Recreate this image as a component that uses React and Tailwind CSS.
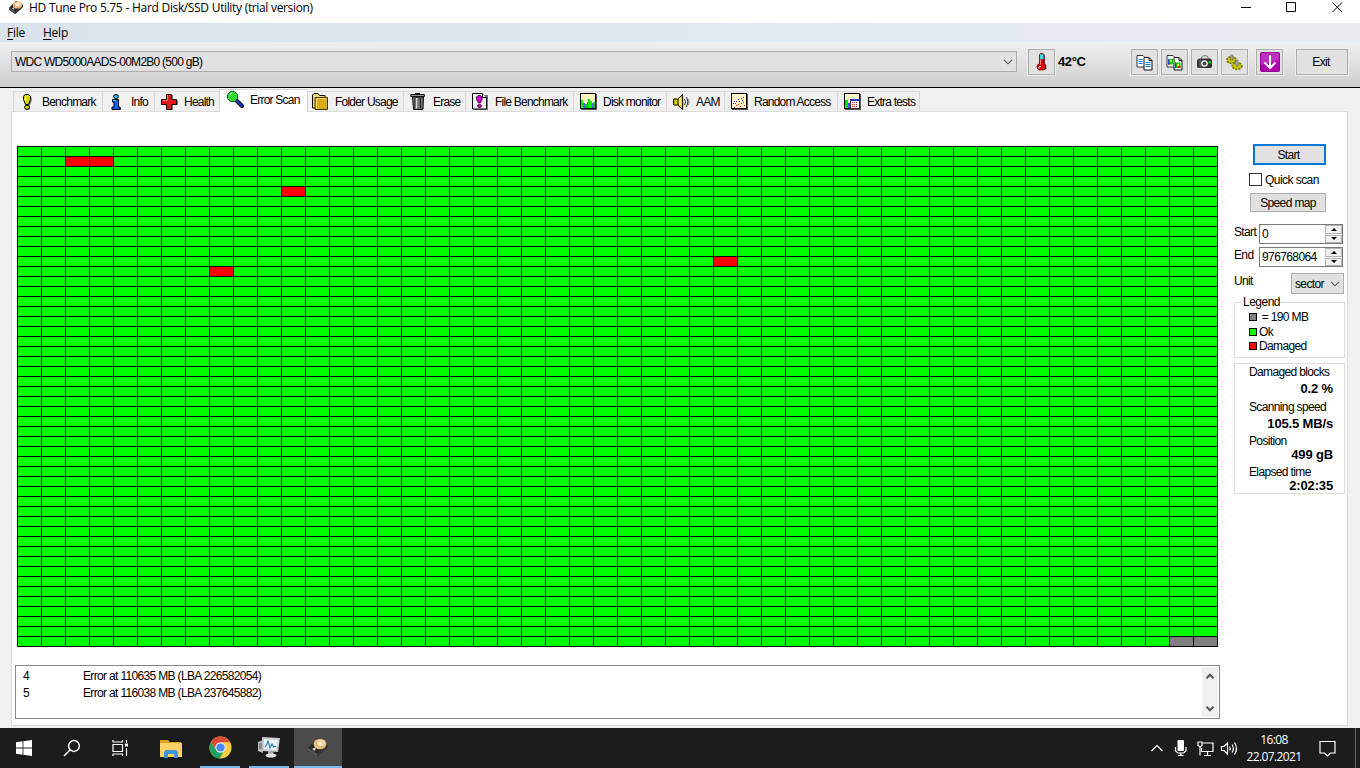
import React from 'react';

const COLS = 50;
const ROWS = 50;
const damaged = new Set(['1-2', '1-3', '4-11', '11-29', '12-8']);
const pending = new Set(['49-48', '49-49']);

const ChevronDown = ({ className = '' }) => (
  <svg viewBox="0 0 10 6" className={`h-[6px] w-[10px] shrink-0 ${className}`} fill="none" stroke="#555" strokeWidth="1.1">
    <path d="M1 0.8 5 4.8 9 0.8" />
  </svg>
);

const DiskIcon = ({ className = 'h-4 w-4' }) => (
  <svg viewBox="0 0 20 20" className={className}>
    <path d="M0 11 10 1 20 7 20 10 9 20 0 14Z" fill="#2e2a28" />
    <path d="M0 11 9 16.500 9 20 0 14Z" fill="#555" />
    <path d="M9 16.500 20 7 20 10 9 20Z" fill="#3b3634" />
    <ellipse cx="12" cy="7" rx="6.500" ry="5.200" fill="#e8b878" />
    <ellipse cx="13" cy="6" rx="4" ry="3" fill="#f6d6a4" />
    <circle cx="12" cy="7" r="1.600" fill="#fff" />
    <path d="M4 12 8 10 7 14Z" fill="#d8d8d8" />
  </svg>
);

const BenchmarkIcon = () => (
  <svg viewBox="0 0 16 16" className="h-4 w-4">
    <path d="M5 3 6.500 1 10.500 1 12 3 12 6 10 11 7 11 5 6Z" transform="translate(.7 .7)" fill="#777" />
    <path d="M4.500 2.500 6 .5 9.500 .5 11.500 2.500 11.500 5.500 9.500 10.500 6.500 10.500 4.500 5.500Z" fill="#d8d800" stroke="#000" />
    <path d="M6.500 2.500v4" stroke="#ffffc0" strokeWidth="1.300" />
    <ellipse cx="8.700" cy="14" rx="2.500" ry="2" fill="#777" />
    <ellipse cx="8" cy="13.300" rx="2.500" ry="2" fill="#d8d800" stroke="#000" />
  </svg>
);

const InfoIcon = () => (
  <svg viewBox="0 0 16 16" className="h-4 w-4">
    <path d="M5 6.500h6v7h2v2.500H5v-2.500h1.500v-4.500H5Z" fill="#555" />
    <path d="M4.500 5.500h6v7.500h1.500v2.500h-8V13h2V8h-1.500Z" fill="#1060f8" stroke="#000" />
    <path d="M5 6.500h3" stroke="#40c8ff" />
    <ellipse cx="8" cy="2.500" rx="2.500" ry="2" fill="#20c8ff" stroke="#000" />
  </svg>
);

const HealthIcon = () => (
  <svg viewBox="0 0 17 16" className="h-4 w-[17px]">
    <path d="M6 1h6v5h5v5h-5v5H6v-5H1V6h5Z" fill="#777" />
    <path d="M5.500.5h5v5h5v5h-5v5h-5v-5h-5v-5h5Z" fill="#e01818" stroke="#200" />
    <path d="M6.500 6.500v-5M1.500 6.500h5" stroke="#ff7070" />
  </svg>
);

const ScanIcon = () => (
  <svg viewBox="0 0 17 17" className="h-[17px] w-[17px]">
    <path d="M9.500 9.500 15 15" stroke="#000" strokeWidth="4" strokeLinecap="round" />
    <path d="M9.500 9.500 15 15" stroke="#1038d8" strokeWidth="2" strokeLinecap="round" />
    <path d="M3.500.5h4l3 3v4l-3 3h-4l-3-3v-4Z" fill="#2edc2e" stroke="#063" />
    <path d="M3 4 5 2" stroke="#c0ffc0" strokeWidth="1.500" />
  </svg>
);

const FolderIcon = () => (
  <svg viewBox="0 0 16 17" className="h-[17px] w-4">
    <path d="M.5 15V2L2 .5h4L7.500 2.500h5.500V15Z" fill="#f5e060" stroke="#000" />
    <path d="M3 16.500v-12h12.500v12Z" fill="#d8ac18" stroke="#3c3000" />
    <path d="M4.500 15.500v-10h10" stroke="#ffe070" fill="none" />
  </svg>
);

const EraseIcon = () => (
  <svg viewBox="0 0 16 17" className="h-[17px] w-4">
    <path d="M2.500 4h11l-.5 12.500h-9.500Z" fill="#707070" stroke="#111" />
    <path d="M5 5v10.500M10.500 5v10.500" stroke="#222" />
    <path d="M6.500 5v10.500" stroke="#ddd" strokeWidth="1.500" />
    <path d="M.8 1.500h13.500v2H.8Z" fill="#999" stroke="#111" />
    <path d="M5 .5h5" stroke="#111" />
  </svg>
);

const FileBenchmarkIcon = () => (
  <svg viewBox="0 0 16 17" className="h-[17px] w-4">
    <path d="M2 2h14v15H2Z" fill="#777" />
    <path d="M.5.5h10l4 4v11.500H.5Z" fill="#f0f0f0" stroke="#000" />
    <path d="M10.500.5v4h4" fill="#fff" stroke="#000" />
    <path d="M4.500 4 6 2.500h2.500L10 4v2.500L8.500 10h-2L4.500 6.500Z" fill="#d000d0" stroke="#400040" strokeWidth=".8" />
    <ellipse cx="7.500" cy="13" rx="2" ry="1.500" fill="#d000d0" stroke="#400040" strokeWidth=".8" />
  </svg>
);

const MonitorIcon = () => (
  <svg viewBox="0 0 17 17" className="h-[17px] w-[17px]" shapeRendering="crispEdges">
    <path d="M1 1h16v16H1Z" fill="#555" />
    <path d="M.5.5h15v15H.5Z" fill="#fff6c0" stroke="#000" />
    <path d="M1 7h2v8H1ZM3 10h2v5H3ZM8 6h2v9H8ZM10 8h2v7h-2ZM13 9h2v6h-2Z" fill="#00f000" />
    <path d="M3 10h2v5H3ZM7 9h1v6H7ZM12 10h1v5h-1Z" fill="#5050ff" />
    <path d="M5 11h2v4H5ZM13 11h2v4h-2Z" fill="#00d000" />
  </svg>
);

const SpeakerIcon = () => (
  <svg viewBox="0 0 18 16" className="h-4 w-[18px]">
    <path d="M.7 5h4l5-4.500v15L4.700 11h-4Z" fill="#d8d000" stroke="#000" />
    <path d="M5 5v6" stroke="#000" />
    <path d="M7 4v7" stroke="#ffff90" strokeWidth="1.500" />
    <path d="M11.500 5q2 3 0 6M13.500 3q3 5 0 10" stroke="#222" fill="none" />
    <path d="M15.500 5q1.500 3 0 6" stroke="#888" fill="none" />
  </svg>
);

const RandomIcon = () => (
  <svg viewBox="0 0 17 17" className="h-[17px] w-[17px]" shapeRendering="crispEdges">
    <path d="M1 1h16v16H1Z" fill="#555" />
    <path d="M.5.5h15v15H.5Z" fill="#fff6c8" stroke="#000" />
    <path d="M2 10h1v1H2ZM3 8h1v1H3ZM5 8h1v1H5ZM7 6h1v1H7ZM8 8h1v1H8ZM10 5h1v1h-1ZM12 4h1v1h-1ZM11 7h1v1h-1Z" fill="#2020e0" />
    <path d="M3 14h1v1H3ZM5 12h1v1H5ZM4 10h1v1H4ZM7 11h1v1H7ZM9 13h1v1H9ZM10 10h1v1h-1ZM12 9h1v1h-1ZM13 12h1v1h-1Z" fill="#e02020" />
  </svg>
);

const ExtraIcon = () => (
  <svg viewBox="0 0 17 17" className="h-[17px] w-[17px]" shapeRendering="crispEdges">
    <path d="M1 1h16v16H1Z" fill="#555" />
    <path d="M.5.5h15v15H.5Z" fill="#fff6c8" stroke="#000" />
    <path d="M1 7h3v8H1Z" fill="#00e000" />
    <path d="M4 10h2v5H4Z" fill="#5050ff" />
    <path d="M6 6h9v9H6Z" fill="#fff" stroke="#333" />
    <path d="M6 6h9v2H6Z" fill="#2040c0" />
    <path d="M8 9h1v1H8ZM10 9h1v1h-1ZM12 9h1v1h-1ZM8 11h1v1H8ZM10 11h1v1h-1ZM12 11h1v1h-1ZM8 13h1v1H8ZM10 13h1v1h-1ZM12 13h1v1h-1Z" fill="#e02020" />
  </svg>
);

const tabs = [
  { label: 'Benchmark', icon: BenchmarkIcon, width: 'w-[89px]', slot: 'w-[28px] pl-[5px]' },
  { label: 'Info', icon: InfoIcon, width: 'w-[52px]', slot: 'w-[28px] pl-[5px]' },
  { label: 'Health', icon: HealthIcon, width: 'w-[65px]' },
  { label: 'Error Scan', icon: ScanIcon, width: 'w-[88px]', slot: 'w-[30px] pl-[7px]', active: true },
  { label: 'Folder Usage', icon: FolderIcon, width: 'w-[96px]', slot: 'w-[27px] pl-[4px]' },
  { label: 'Erase', icon: EraseIcon, width: 'w-[62px]' },
  { label: 'File Benchmark', icon: FileBenchmarkIcon, width: 'w-[108px]' },
  { label: 'Disk monitor', icon: MonitorIcon, width: 'w-[93px]' },
  { label: 'AAM', icon: SpeakerIcon, width: 'w-[58px]', slot: 'w-[29px] pl-[6px]' },
  { label: 'Random Access', icon: RandomIcon, width: 'w-[113px]' },
  { label: 'Extra tests', icon: ExtraIcon, width: 'w-[82px]' },
];

const Tab = ({ label, icon: Icon, width, slot = 'w-[29px] pl-[6px]', active }) => (
  <div
    className={`${width} flex items-center border-l border-t border-[#d9d9d9] ${
      active ? 'relative z-10 -mb-px h-[23px] bg-white pb-[3px]' : 'h-[20px] bg-[#f0f0f0]'
    }`}
  >
    <span className={`flex shrink-0 ${slot}`}><Icon /></span>
    <span className="whitespace-nowrap tracking-[-0.78px]">{label}</span>
  </div>
);

const TitleBar = () => (
  <div className="flex h-[23px] items-start bg-white pl-[9px] font-['Open_Sans',sans-serif] text-[12px] leading-[16px]">
    <DiskIcon className="h-[14px] w-[14px]" />
    <span className="ml-[6px] whitespace-nowrap tracking-[-0.37px] [word-spacing:0.4px]">HD Tune Pro 5.75 - Hard Disk/SSD Utility (trial version)</span>
    <svg viewBox="0 0 110 14" className="ml-auto mr-[12px] h-[14px] w-[110px]" fill="none" stroke="#000">
      <path d="M3 7.500h10" />
      <path d="M48.500 2.500h9v9h-9Z" />
      <path d="M94.500 2.500 104 12M104 2.500 94.500 12" />
    </svg>
  </div>
);

const MenuBar = () => (
  <div className="flex h-[19px] items-center gap-[18px] bg-gradient-to-r from-[#dae3ec] via-[#e2e8f1] to-[#e8edf1] pl-[7px] font-['Open_Sans',sans-serif] text-[12px] leading-[18px] tracking-[-0.25px]">
    <span><u className="underline-offset-2">F</u>ile</span>
    <span><u className="underline-offset-2">H</u>elp</span>
  </div>
);

const ToolButton = ({ children, className = 'w-[27px]' }) => (
  <div className={`${className} flex h-[26px] shrink-0 items-center justify-center border border-[#adadad] bg-[#e1e1e1] shadow-[0_0_0_1px_#eeeeee]`}>
    {children}
  </div>
);

const Thermometer = () => (
  <svg viewBox="0 0 11 18" className="h-[18px] w-[11px]">
    <path d="M4 2 5 .5h2.500L9 2v8.500l1.500 2v3L8.500 17H3L1 15.500v-3l2.500-2Z" fill="#555" />
    <path d="M3.500 2 4.500 .5h2L8 2v8.500l1.500 2v2.500L7.500 17h-4L1 15v-2.500l2.500-2Z" fill="#d80808" stroke="#600" strokeWidth=".8" />
    <path d="M4 1.200h3.500v5H4Z" fill="#40d8e8" />
    <path d="M4.500 6.500v5" stroke="#ff8080" />
    <path d="M3 13.500h2M3 14v1.500" stroke="#fff" />
  </svg>
);

const CopyIcon = ({ picture }) => (
  <svg viewBox="0 0 17 17" className="h-[17px] w-[17px]">
    <path d="M1 1.500h6l2 2V13H1Z" fill="#fff" stroke="#333" />
    <path d="M8 3.500h5l3 3v9.500H8Z" fill="#fff" stroke="#111" />
    <path d="M13 3.500v3h3" fill="none" stroke="#111" />
    {picture ? (
      <g>
        <path d="M2.500 5h4.500v5.500H2.500ZM9.500 8.500h5v5.500h-5Z" fill="#10c010" />
        <path d="M2.500 8.500h1.500v2H2.500ZM12 12h2.500v2H12Z" fill="#e02020" />
        <path d="M4 6h2v2H4ZM11 10h2v2h-2Z" fill="#e0f020" />
        <path d="M2.500 5v5.500M9.500 8.500V14" stroke="#1848c0" />
      </g>
    ) : (
      <path d="M2.500 5.500h4M2.500 7.500h4M2.500 9.500h4M9.500 8.500h5M9.500 10.500h5M9.500 12.500h5" stroke="#0878e0" />
    )}
  </svg>
);

const CameraIcon = () => (
  <svg viewBox="0 0 17 15" className="h-[15px] w-[17px]">
    <path d="M5.500 4V2L7 .8h3.500L12 2v2" fill="#ddd" stroke="#777" />
    <path d="M1 5 3 3.500h11.500L16 5v7l-1 1H2l-1-1Z" fill="#333" />
    <path d="M4 4v9" stroke="#777" />
    <circle cx="8.500" cy="8.500" r="3.300" fill="#fff" />
    <circle cx="8.500" cy="8.500" r="2" fill="#444" />
    <path d="M12.500 6H15v2.500h-2.500Z" fill="#00c820" />
  </svg>
);

const GearsIcon = () => (
  <svg viewBox="0 0 17 17" className="h-[17px] w-[17px]">
    <ellipse cx="5.500" cy="6" rx="4.500" ry="3.300" fill="#d0c800" stroke="#807800" strokeWidth="1.800" strokeDasharray="2 1" />
    <ellipse cx="11" cy="12" rx="4.800" ry="3.300" fill="#d0c800" stroke="#807800" strokeWidth="1.800" strokeDasharray="2 1" />
    <path d="M4.800 1h2v5h-2ZM10 6h2v6h-2Z" fill="#c8c8c8" stroke="#555" strokeWidth=".7" />
  </svg>
);

const DownloadIcon = () => (
  <svg viewBox="0 0 20 20" className="h-5 w-5">
    <rect x=".5" y=".5" width="19" height="19" rx="1" fill="#b000b0" stroke="#900090" />
    <path d="M1 1h18v7L1 13Z" fill="#d060d0" opacity=".5" />
    <path d="M10 3v13" stroke="#fff" strokeWidth="2" />
    <path d="M4.500 10.500 10 16l5.500-5.500" fill="none" stroke="#fff" strokeWidth="2" />
  </svg>
);

const Toolbar = () => (
  <div className="flex h-[46px] items-start border-b border-black bg-gradient-to-b from-[#f0f0f0] to-[#cecece] pl-[11px] pt-[7px]">
    <div className="mt-[2px] flex h-[21px] w-[1006px] items-center justify-between border border-[#adadad] bg-[#e1e1e1] pl-[3px] pr-[3px]">
      <span className="tracking-[-0.74px]">WDC WD5000AADS-00M2B0 (500 gB)</span>
      <ChevronDown />
    </div>
    <div className="ml-[11px] flex items-center">
      <ToolButton><Thermometer /></ToolButton>
      <span className="ml-[3px] w-[73px] whitespace-nowrap text-[13px] font-bold tracking-[-0.4px]">42°C</span>
    </div>
    <div className="flex gap-[3px]">
      <ToolButton><CopyIcon /></ToolButton>
      <ToolButton><CopyIcon picture /></ToolButton>
      <ToolButton><CameraIcon /></ToolButton>
      <ToolButton><GearsIcon /></ToolButton>
    </div>
    <div className="ml-[8px] flex gap-[13px]">
      <ToolButton><DownloadIcon /></ToolButton>
      <ToolButton className="w-[52px] pr-[2px]">Exit</ToolButton>
    </div>
  </div>
);

const cellColor = (row, col) => {
  const key = `${row}-${col}`;
  if (damaged.has(key)) return 'bg-[#ff0000]';
  if (pending.has(key)) return 'bg-[#808080]';
  return 'bg-[#00ff00]';
};

const BlockMap = () => (
  <div className="grid h-[501px] w-[1201px] grid-cols-[repeat(50,23px)] grid-rows-[repeat(50,9px)] gap-px bg-black p-px">
    {Array.from({ length: ROWS * COLS }, (_, i) => (
      <div key={i} className={cellColor(Math.floor(i / COLS), i % COLS)} />
    ))}
  </div>
);

const ErrorLog = () => (
  <div className="flex h-[54px] w-[1205px] justify-between border border-[#828790] bg-white p-px">
    <div className="pl-[6px] pt-px leading-[17px] tracking-[-0.66px]">
      <div className="flex"><span className="w-[60px]">4</span><span>Error at 110635 MB (LBA 226582054)</span></div>
      <div className="flex"><span className="w-[60px]">5</span><span>Error at 116038 MB (LBA 237645882)</span></div>
    </div>
    <div className="flex w-[16px] flex-col items-center justify-between bg-[#f0f0f0] pb-[5px] pt-[6px]">
      <svg viewBox="0 0 8 6" className="h-[6px] w-2" fill="none" stroke="#555" strokeWidth="2"><path d="M.5 5.200 4 1.700 7.500 5.200" /></svg>
      <svg viewBox="0 0 8 6" className="h-[6px] w-2" fill="none" stroke="#555" strokeWidth="2"><path d="M.5 .8 4 4.300 7.500 .8" /></svg>
    </div>
  </div>
);

const SpinButton = ({ d }) => (
  <div className="flex flex-1 items-center justify-center border border-[#b4b4b4] bg-[#f0f0f0]">
    <svg viewBox="0 0 6 3" className="h-[3px] w-[6px]"><path d={d} /></svg>
  </div>
);

const Spinner = ({ label, value }) => (
  <div className="flex h-[20px]">
    <span className="w-[25px] leading-[17px]">{label}</span>
    <div className="flex h-[20px] w-[84px] border border-[#7a7a7a] bg-white">
      <span className="flex-1 pl-[2px] leading-[18px] tracking-[-0.6px]">{value}</span>
      <div className="flex w-[17px] flex-col gap-px bg-white">
        <SpinButton d="M0 3h6L3 0Z" />
        <SpinButton d="M0 0h6L3 3Z" />
      </div>
    </div>
  </div>
);

const LegendRow = ({ color, label, className }) => (
  <div className={`flex items-center ${className}`}>
    <span className={`h-[8px] w-[8px] border border-black ${color}`} />
    <span className="ml-[2px] whitespace-pre">{label}</span>
  </div>
);

const Stat = ({ label, value, className, valueClass }) => (
  <div className={className}>
    <div className="pl-[14px] leading-[16px]">{label}</div>
    <div className={`pr-[11px] text-right text-[13px] font-bold leading-[16px] tracking-[-0.15px] ${valueClass}`}>{value}</div>
  </div>
);

const Sidebar = () => (
  <div className="w-[111px] pt-[32px] tracking-[-0.64px]">
    <div className="ml-[19px] flex h-[21px] w-[73px] items-center justify-center border-2 border-[#0078d7] bg-[#e1e1e1] pr-[2px]">Start</div>
    <div className="ml-[15px] mt-[8px] flex h-[13px] items-center whitespace-nowrap">
      <span className="h-[13px] w-[13px] border border-[#333] bg-white" />
      <span className="ml-[3px] tracking-[-0.55px]">Quick scan</span>
    </div>
    <div className="ml-[16px] mt-[7px] flex h-[19px] w-[76px] items-center justify-center border border-[#adadad] bg-[#e1e1e1]">Speed map</div>
    <div className="mt-[12px] flex flex-col gap-[3px]">
      <Spinner label="Start" value="0" />
      <Spinner label="End" value="976768064" />
    </div>
    <div className="mt-[6px] flex h-[21px] justify-between">
      <span className="leading-[16px]">Unit</span>
      <div className="mr-px flex w-[53px] items-center justify-between border border-[#adadad] bg-[#e1e1e1] pl-[3px] pr-[3px]">
        <span>sector</span>
        <ChevronDown />
      </div>
    </div>
    <div className="mt-[8px] h-[56px] border border-[#dcdcdc] pl-[14px]">
      <div className="-ml-[8px] -mt-[8px] w-[38px] bg-white pl-[2px] leading-[15px] tracking-[-0.5px]">Legend</div>
      <LegendRow className="h-[14px]" color="bg-[#808080]" label=" = 190 MB" />
      <LegendRow className="h-[15px]" color="bg-[#00ff00]" label="Ok" />
      <LegendRow className="h-[14px]" color="bg-[#ff0000]" label="Damaged" />
    </div>
    <div className="mt-[5px] h-[131px] border border-[#dcdcdc]">
      <Stat label="Damaged blocks" value="0.2 %" valueClass="pt-px" />
      <Stat className="mt-[2px]" label="Scanning speed" value="105.5 MB/s" valueClass="pt-px" />
      <Stat className="mt-px" label="Position" value="499 gB" valueClass="-mt-[2px]" />
      <Stat className="mt-px" label="Elapsed time" value="2:02:35" valueClass="-mt-[2px]" />
    </div>
  </div>
);

const WindowsLogo = () => (
  <svg viewBox="0 0 16 16" className="h-4 w-4" fill="#fff">
    <path d="M0 2.200 6.600 1.300V7.600H0ZM7.400 1.200 16 0V7.600H7.400ZM0 8.400h6.600v6.300L0 13.800ZM7.400 8.400H16V16l-8.600-1.200Z" />
  </svg>
);

const SearchIcon = () => (
  <svg viewBox="0 0 18 18" className="h-[18px] w-[18px]" fill="none" stroke="#fff" strokeWidth="1.500">
    <circle cx="11" cy="7" r="5.400" />
    <path d="M7 11 1 17" />
  </svg>
);

const TaskViewIcon = () => (
  <svg viewBox="0 0 17 16" className="-ml-[2px] h-4 w-[17px]" fill="none" stroke="#fff" strokeWidth="1.200">
    <path d="M1 4.500h9.500v7H1ZM1 0v2h9.500V0M1 16v-2h9.500v2M14.500 0v3M14.500 8v8" />
    <path d="M13 3.500h3v3h-3Z" fill="#fff" stroke="none" />
  </svg>
);

const ExplorerIcon = () => (
  <svg viewBox="0 0 22 19" className="h-[19px] w-[22px]">
    <path d="M0 1h8l2 2h11v4H0Z" fill="#e0a01c" />
    <path d="M0 4h22v14H0Z" fill="#ffd466" />
    <path d="M4 19v-6L6 11h10l2 2v6h-4v-4H8v4Z" fill="#3c98dc" />
  </svg>
);

const ChromeIcon = () => (
  <svg viewBox="0 0 24 24" className="h-[23px] w-[23px]">
    <circle cx="12" cy="12" r="11.500" fill="#ffcd40" />
    <path d="M12 12 7.200 14.800 2 6.300A11.500 11.500 0 0 1 22 6.500H12Z" fill="#de4b3c" />
    <path d="M2 6.300A11.500 11.500 0 0 0 11 23.450L16 15 12 12 7.200 14.500Z" fill="#1da261" />
    <circle cx="12" cy="12" r="5.400" fill="#f4f4f4" />
    <circle cx="12" cy="12" r="4.300" fill="#4a8af4" />
  </svg>
);

const PerfMonIcon = () => (
  <svg viewBox="0 0 24 22" className="h-[22px] w-6">
    <path d="M1 6 6 4v13L1 15Z" fill="#b8bcc0" />
    <path d="M2 8h3M2 10h3M2 12h3" stroke="#555" />
    <path d="M5 1 23 2 21 16 6 15Z" fill="#c8ccd0" />
    <path d="M7 3 21 4 19.500 14 7.500 13Z" fill="#f0f8ff" />
    <path d="M8 11 9.500 9 11 5 13 12 15 8 16.500 11 19 10" fill="none" stroke="#1878c0" strokeWidth="1.100" />
    <path d="M11 15h5l1 4h-6Z" fill="#a8acb0" />
    <ellipse cx="14" cy="19.500" rx="5.500" ry="2" fill="#e0e2e4" />
  </svg>
);

const TrayIcons = () => (
  <svg viewBox="0 0 90 20" className="h-5 w-[90px]" fill="none" stroke="#fff" strokeWidth="1.200">
    <path d="M1.500 13 7 7.500 12.500 13" />
    <rect x="27.500" y="2" width="6.500" height="11" rx="1" fill="#fff" stroke="none" />
    <path d="M25.500 9v4l2.500 2h5.500l2.500-2V9M30.800 15v2.500M28 17.500h5.500" />
    <path d="M52.500 5h10.500v8.500H51.500V10M57.500 13.500v4M54 17.500h7" />
    <path d="M48 4h4v3.500l-2 1.500-2-1.500ZM50 9v8.500" />
    <path d="M71.500 8.500h2.500l3.500-3.500v11l-3.500-3.500h-2.500ZM79.500 8.500q1.500 2 0 4M82 6.500q2.800 4 0 8M84.500 4.500q4 6 0 12" />
  </svg>
);

const Taskbar = () => (
  <div className="flex h-[40px] bg-[#1c1c1c] text-white">
    <div className="flex w-[48px] items-center justify-center"><WindowsLogo /></div>
    <div className="flex w-[48px] items-center justify-center"><SearchIcon /></div>
    <div className="flex w-[50px] items-center justify-center"><TaskViewIcon /></div>
    <div className="flex w-[50px] items-center justify-center"><ExplorerIcon /></div>
    <div className="ml-[4px] flex w-[40px] items-center justify-center border-b-2 border-[#76b9ed]"><ChromeIcon /></div>
    <div className="ml-[9px] flex w-[40px] items-center justify-center border-b-2 border-[#76b9ed]"><PerfMonIcon /></div>
    <div className="ml-[5px] flex w-[48px] items-center justify-center border-b-2 border-[#76b9ed] bg-[#4b4b4b]"><DiskIcon className="h-5 w-5" /></div>
    <div className="ml-auto flex items-center">
      <TrayIcons />
      <div className="ml-px w-[66px] pb-px text-center font-['Open_Sans',sans-serif] text-[12px] leading-[17px] tracking-[-0.6px]">
        <div>16:08</div>
        <div>22.07.2021</div>
      </div>
      <svg viewBox="0 0 17 17" className="ml-[12px] h-[17px] w-[17px]" fill="none" stroke="#fff" strokeWidth="1.200">
        <path d="M1 1.500h15v11.500h-4.500L8.500 16 5.500 13H1Z" />
      </svg>
      <div className="ml-[19px] h-[40px] w-[5px] border-l border-[#666]" />
    </div>
  </div>
);

export default function App() {
  return (
    <div className="flex h-[768px] w-[1360px] flex-col overflow-hidden bg-[#f0f0f0] font-['Liberation_Sans',sans-serif] text-[12px] leading-[14px] tracking-[-0.65px] text-black">
      <TitleBar />
      <MenuBar />
      <Toolbar />
      <div className="flex h-[23px] items-end pl-[13px]">
        {tabs.map((tab) => (
          <Tab key={tab.label} {...tab} />
        ))}
        <div className="h-[20px] border-l border-[#d9d9d9]" />
      </div>
      <div className="ml-[11px] flex h-[615px] w-[1337px] border border-[#dcdcdc] bg-white">
        <div className="w-[1222px] pl-[3px] pt-[34px]">
          <div className="pl-[2px]"><BlockMap /></div>
          <div className="mt-[18px]"><ErrorLog /></div>
        </div>
        <Sidebar />
      </div>
      <div className="mt-auto">
        <Taskbar />
      </div>
    </div>
  );
}
